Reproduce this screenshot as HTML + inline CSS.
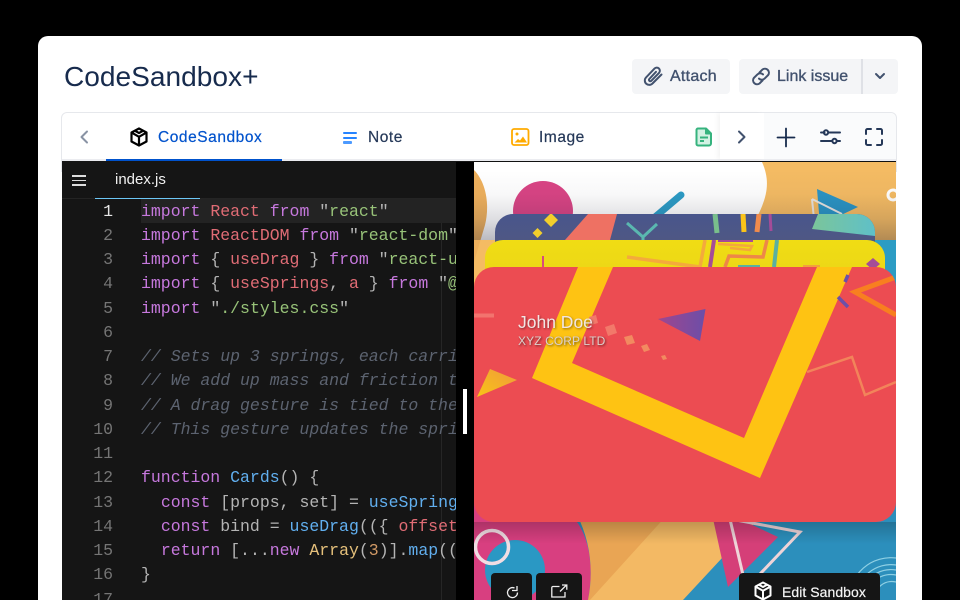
<!DOCTYPE html>
<html><head><meta charset="utf-8"><style>
*{box-sizing:border-box}
html,body{margin:0;padding:0;width:960px;height:600px;overflow:hidden;background:#000;font-family:"Liberation Sans",sans-serif}
#root{position:relative;width:960px;height:600px;overflow:hidden;background:#000}
.a{position:absolute}
#card{left:38px;top:36px;width:884px;height:564px;background:#fff;border-radius:10px 10px 0 0}
.btn{background:#f4f5f7;color:#42526e;font-size:16px}
.lbl{font-weight:400;-webkit-text-stroke:.35px #42526e;line-height:20px;white-space:nowrap}
.tab{font-size:15.5px;color:#253858;top:129px;letter-spacing:.55px;line-height:18px;-webkit-text-stroke:.2px currentColor}
#code{left:141px;top:199.5px;height:400px;font:16.5px/24.27px "Liberation Mono",monospace;color:#b4b4b4;white-space:pre;width:315px;overflow:hidden}
#nums{left:62px;width:51px;top:199.5px;height:400px;overflow:hidden;font:16.5px/24.27px "Liberation Mono",monospace;color:#757575;text-align:right;white-space:pre}
.k{color:#c678dd}.r{color:#e06c75}.s{color:#98c379}.c{color:#5c6370;font-style:italic}.f{color:#61afef}.y{color:#e5c07b}.n{color:#d19a66}
</style></head><body><div id="root">
<div class="a" id="card"></div>
<div class="a" style="left:64px;top:59px;font-size:28.1px;line-height:36px;color:#172b4d;white-space:nowrap">CodeSandbox+</div>

<div class="a btn" style="left:632px;top:59px;width:98px;height:35px;border-radius:4px"></div>
<svg class="a" style="left:642px;top:65px" width="22" height="22" viewBox="0 0 22 22" fill="none" stroke="#42526e" stroke-width="2" stroke-linecap="round"><path d="M19.500 9.500 10.500 18.500a4.400 4.400 0 0 1-6.500-6L12.500 3.600a3.100 3.100 0 0 1 4.500 4.300L9.300 15.800a1.300 1.300 0 0 1-2-1.800L14 6.800"/></svg>
<div class="a btn lbl" style="left:670px;top:67px;background:none;letter-spacing:.25px">Attach</div>
<div class="a btn" style="left:739px;top:59px;width:159px;height:35px;border-radius:4px"></div>
<div class="a" style="left:861px;top:59px;width:2px;height:35px;background:#dfe1e6"></div>
<svg class="a" style="left:750px;top:66px" width="22" height="21" viewBox="0 0 22 21" fill="none" stroke="#42526e" stroke-width="2" stroke-linecap="round"><path d="M9.500 6.500 12.500 3.500a4 4 0 0 1 5.600 5.600l-3.500 3.500a4 4 0 0 1-5.600 0"/><path d="M12.500 14.500 9.500 17.500a4 4 0 0 1-5.600-5.600l3.500-3.500a4 4 0 0 1 5.600 0"/></svg>
<div class="a btn lbl" style="left:777px;top:67px;background:none">Link issue</div>
<svg class="a" style="left:874px;top:71px" width="12" height="10" viewBox="0 0 12 10" fill="none" stroke="#42526e" stroke-width="2" stroke-linecap="round" stroke-linejoin="round"><path d="M2 3l4 4 4-4"/></svg>

<div class="a" style="left:61px;top:112px;width:836px;height:60px;border:1px solid #e6e8ec;border-radius:6px 6px 0 0;background:#fff"></div>
<div class="a" style="left:62px;top:159px;width:834px;height:2px;background:#ebecf0"></div>
<div class="a" style="left:106px;top:159px;width:176px;height:2px;background:#0052cc"></div>
<div class="a" style="left:720px;top:113px;width:44px;height:46px;background:#fff;box-shadow:-3px 0 4px rgba(0,0,0,.04)"></div>
<div class="a" style="left:764px;top:113px;width:132px;height:46px;background:#fafbfc;border-radius:0 6px 0 0"></div>

<svg class="a" style="left:76px;top:129px" width="16" height="16" viewBox="0 0 16 16" fill="none" stroke="#8993a4" stroke-width="2" stroke-linecap="round" stroke-linejoin="round"><path d="M11 2.500 5.500 8l5.500 5.500"/></svg>
<svg class="a" style="left:129px;top:127px" width="20" height="20" viewBox="0 0 20 20" fill="none" stroke="#000" stroke-width="2.200" stroke-linejoin="round"><path d="M10 1.500 17.500 5.500v9L10 18.500 2.500 14.500v-9z"/><path d="M2.800 5.700 10 9.800l7.200-4.100M10 9.800v8.500M6 3.800 10 6l4-2.200"/></svg>
<div class="a tab" style="left:158px;color:#0052cc">CodeSandbox</div>
<div class="a" style="left:343px;top:131.500px;width:14px;height:2.500px;background:#2684ff;border-radius:1px"></div>
<div class="a" style="left:343px;top:136.500px;width:14px;height:2.500px;background:#2684ff;border-radius:1px"></div>
<div class="a" style="left:343px;top:141px;width:9px;height:2.500px;background:#4c9aff;border-radius:1px"></div>
<div class="a tab" style="left:368px">Note</div>
<svg class="a" style="left:511px;top:128px" width="19" height="18" viewBox="0 0 19 18"><rect x="1" y="1" width="16.500" height="16" rx="2" fill="none" stroke="#ffab00" stroke-width="1.800"/><circle cx="6" cy="6" r="1.500" fill="#ffab00"/><path d="M3.500 14.500 7 11l2 1.500 3-4 4 6z" fill="#ffab00"/></svg>
<div class="a tab" style="left:539px">Image</div>
<svg class="a" style="left:695px;top:127px" width="18" height="20" viewBox="0 0 18 20" fill="#d3f1e3" stroke="#36b37e" stroke-width="2" stroke-linejoin="round"><path d="M3 1.500h8l5 5v10a2 2 0 0 1-2 2H3a1.500 1.500 0 0 1-1.500-1.500V3A1.500 1.500 0 0 1 3 1.500z"/><path d="M11 2v4.500h4.500" fill="#36b37e"/><path d="M5 10.500h8M5 14h4" fill="none"/></svg>
<svg class="a" style="left:734px;top:129px" width="16" height="16" viewBox="0 0 16 16" fill="none" stroke="#42526e" stroke-width="2" stroke-linecap="round" stroke-linejoin="round"><path d="M5 2.500 10.500 8 5 13.500"/></svg>
<svg class="a" style="left:775px;top:126px" width="22" height="22" viewBox="0 0 22 22" fill="none" stroke="#172b4d" stroke-width="1.800" stroke-linecap="round"><path d="M11 2.500v18M2.500 11.500h17"/></svg>
<svg class="a" style="left:819px;top:127px" width="22" height="20" viewBox="0 0 22 20" fill="none" stroke="#253858" stroke-width="2" stroke-linecap="round"><path d="M2 5.500h3.500M9.500 5.500H21M2 14h11.500M17.500 14H21"/><circle cx="7" cy="5.500" r="2.200"/><circle cx="15.500" cy="14" r="2.200"/></svg>
<svg class="a" style="left:865px;top:128px" width="18" height="18" viewBox="0 0 18 18" fill="none" stroke="#253858" stroke-width="2" stroke-linecap="round"><path d="M1 6V2.500A1.500 1.500 0 0 1 2.500 1H6M12 1h3.500A1.500 1.500 0 0 1 17 2.500V6M17 12v3.500a1.500 1.500 0 0 1-1.500 1.500H12M6 17H2.500A1.500 1.500 0 0 1 1 15.500V12"/></svg>

<div class="a" style="left:62px;top:161px;width:412px;height:439px;background:#151515"></div>
<div class="a" style="left:456px;top:162px;width:18px;height:438px;background:#000"></div>
<div class="a" style="left:474px;top:161px;width:422px;height:1px;background:#111"></div>
<div class="a" style="left:72px;top:175px;width:14px;height:1.500px;background:#ddd"></div>
<div class="a" style="left:72px;top:179.500px;width:14px;height:1.500px;background:#ddd"></div>
<div class="a" style="left:72px;top:184px;width:14px;height:1.500px;background:#ddd"></div>
<div class="a" style="left:115px;top:171px;font-size:15px;line-height:18px;color:#f0f0f0">index.js</div>
<div class="a" style="left:62px;top:198px;width:394px;height:1px;background:#242424"></div>
<div class="a" style="left:95px;top:198px;width:105px;height:1px;background:#6cc7f6"></div>
<div class="a" style="left:141px;top:199px;width:315px;height:24px;background:#232323"></div>
<div class="a" style="left:441px;top:223px;width:1px;height:377px;background:#262626"></div>
<div class="a" id="nums"><span style="color:#e6e6e6">1</span>
2
3
4
5
6
7
8
9
10
11
12
13
14
15
16
17</div>
<div class="a" id="code"><span class="k">import</span> <span class="r">React</span> <span class="k">from</span> "<span class="s">react</span>"
<span class="k">import</span> <span class="r">ReactDOM</span> <span class="k">from</span> "<span class="s">react-dom</span>"
<span class="k">import</span> { <span class="r">useDrag</span> } <span class="k">from</span> "<span class="s">react-use-gesture</span>"
<span class="k">import</span> { <span class="r">useSprings</span>, <span class="r">a</span> } <span class="k">from</span> "<span class="s">@react-spring/web</span>"
<span class="k">import</span> "<span class="s">./styles.css</span>"

<span class="c">// Sets up 3 springs, each carries</span>
<span class="c">// We add up mass and friction to</span>
<span class="c">// A drag gesture is tied to the</span>
<span class="c">// This gesture updates the springs</span>

<span class="k">function</span> <span class="f">Cards</span>() {
  <span class="k">const</span> [props, set] = <span class="f">useSprings</span>
  <span class="k">const</span> bind = <span class="f">useDrag</span>(({ <span class="r">offset</span>
  <span class="k">return</span> [...<span class="k">new</span> <span class="y">Array</span>(<span class="n">3</span>)].<span class="f">map</span>((
}</div>
<div class="a" style="left:463px;top:389px;width:4px;height:45px;background:#fff"></div>

<svg class="a" style="left:474px;top:162px" width="422" height="438" viewBox="474 162 422 438">
<defs>
<linearGradient id="sh" x1="0" y1="0" x2="0" y2="1"><stop offset="0" stop-color="#1a1a30" stop-opacity="0"/><stop offset=".35" stop-color="#1a1a30" stop-opacity=".03"/><stop offset=".7" stop-color="#1a1a30" stop-opacity=".14"/><stop offset="1" stop-color="#1a1a30" stop-opacity=".3"/></linearGradient>
<linearGradient id="bk" x1="0" y1="0" x2="0" y2="1"><stop offset="0" stop-color="#49568c"/><stop offset="1" stop-color="#55597a"/></linearGradient>
<linearGradient id="yl" x1="0" y1="0" x2="0" y2="1"><stop offset="0" stop-color="#f0dd14"/><stop offset=".45" stop-color="#edd816"/><stop offset="1" stop-color="#b9a01c"/></linearGradient>
<linearGradient id="tl" x1="0" y1="0" x2="1" y2="0"><stop offset="0" stop-color="#7bc59a"/><stop offset="1" stop-color="#5fc0c8"/></linearGradient>
<linearGradient id="pu" x1="0" y1="0" x2="1" y2="0"><stop offset="0" stop-color="#a0468e"/><stop offset="1" stop-color="#6c4ea8"/></linearGradient>
<linearGradient id="og" x1="0" y1="1" x2="1" y2="0"><stop offset="0" stop-color="#f8c416"/><stop offset="1" stop-color="#f09a3c"/></linearGradient>
<linearGradient id="lo" x1="0" y1="0" x2="0" y2="1"><stop offset="0" stop-color="#000" stop-opacity=".2"/><stop offset="1" stop-color="#000" stop-opacity="0"/></linearGradient>
<clipPath id="cb"><rect x="495" y="214" width="380" height="60" rx="18"/></clipPath>
<clipPath id="cy"><rect x="485" y="240" width="400" height="60" rx="18"/></clipPath>
<clipPath id="cr"><rect x="474" y="267" width="422" height="255" rx="20"/></clipPath>
</defs>
<rect x="474" y="162" width="422" height="438" fill="#f4bb63"/>
<rect x="860" y="240" width="36" height="90" fill="#2c9cc4"/>
<path d="M474 162H762C770 180 768 195 758 215L740 240H474z" fill="#fff"/>
<path d="M474 170C486 182 490 205 485 225L474 262z" fill="#eeb05c"/>
<circle cx="543" cy="211" r="30" fill="#d94484"/>
<path d="M655 217 681 195" stroke="#2c9cc6" stroke-width="7" stroke-linecap="round"/>
<path d="M817 189 858 207 820 225z" fill="#2a94c4"/>
<path d="M812 199 842 214M812 199l2 20" fill="none" stroke="#e8e4e0" stroke-width="2"/>
<circle cx="893" cy="195" r="5" fill="none" stroke="#fff" stroke-width="3" stroke-dasharray="20 0"/>
<rect x="474" y="170" width="422" height="70" fill="url(#sh)"/>

<rect x="474" y="500" width="422" height="100" fill="#2c8fbc"/>
<path d="M474 500H577V522C590 540 594 570 588 600H474z" fill="#d83f80"/>
<path d="M577 515H740L720 545 640 600H588C594 570 590 540 577 515z" fill="#e9a554"/>
<path d="M667 515H762L683 600H590z" fill="#f3b964"/>
<path d="M710 505 778 537 728 587z" fill="#d53f78"/>
<path d="M485 570A30 30 0 0 1 545 570 30 30 0 0 1 485 570z" fill="#2a98c4"/>
<circle cx="492" cy="547" r="16.500" fill="none" stroke="#f1dde3" stroke-width="3.500"/>
<path d="M729 515 743 575M736 520 800 532 760 574" fill="none" stroke="#efd4d8" stroke-width="3"/>
<g fill="none" stroke="#8fd0e4" stroke-width="1.200"><path d="M874 600A18 18 0 0 1 896 582"/><path d="M866 599A25 25 0 0 1 896 575"/><path d="M861 599A30 30 0 0 1 896 570"/><path d="M856 599A35 35 0 0 1 896 565"/><path d="M849 599A42 42 0 0 1 896 558"/></g>
<rect x="474" y="522" width="422" height="22" fill="url(#lo)"/>

<rect x="495" y="214" width="380" height="60" rx="18" fill="url(#bk)"/>
<g clip-path="url(#cb)">
<path d="M588 214H617L610 240H565z" fill="#ee7163"/>
<path d="M627 223 643 237 657 224M643 237v6" fill="none" stroke="#5ab8b0" stroke-width="3"/>
<path d="M551 213l7 7-7 7-7-7zM537.500 228l5 5-5 5-5-5z" fill="#f2cf2c"/>
<path d="M715 214 717 233" stroke="#79bf8c" stroke-width="5"/>
<path d="M743 214 744 232" stroke="#fcc419" stroke-width="5"/>
<path d="M759 214 757 232" stroke="#f18b4c" stroke-width="5"/>
<path d="M770 214 771 231" stroke="#a44c98" stroke-width="3"/>
<path d="M818 214H875V236L812 229z" fill="url(#tl)"/>
</g>
<rect x="485" y="240" width="400" height="60" rx="18" fill="url(#yl)"/>
<g clip-path="url(#cy)">
<rect x="542" y="256" width="2" height="11" fill="#d84a80"/>
<path d="M627 257 700 267M705 240 700 267" fill="none" stroke="#f4aa3c" stroke-width="3.500"/>
<path d="M714 240 710 267" stroke="#a44c98" stroke-width="4"/>
<path d="M718 241H753" stroke="#a44c98" stroke-width="2"/>
<path d="M725 267 729 256 763 257 767 240" fill="none" stroke="#ee8748" stroke-width="3.500"/>
<path d="M718 244 752 246 750 250 730 248" fill="none" stroke="#f4a83c" stroke-width="2.500"/>
<path d="M777 240 774 267" stroke="#5ab0a0" stroke-width="4"/>
<path d="M738 266H760" stroke="#5ab0a0" stroke-width="2"/>
<path d="M803 266H820" stroke="#f2a13c" stroke-width="2"/>
<path d="M873 258 880 264 873 270 866 264z" fill="#a44c98"/>
</g>
<rect x="474" y="267" width="422" height="255" rx="20" fill="#ec4c52"/>
<g clip-path="url(#cr)">
<path d="M578 267H613L572 363 744 438 817 267H852L760 478 532 378z" fill="#fec313"/>
<path d="M474 313.500h20v4h-20z" fill="#f2746e"/>
<path d="M658 319 705.500 309 700 341z" fill="url(#pu)"/>
<path d="M589 317l7-2 2 8-7 2zM605 327l9-3 3 9-9 3z" fill="#f2796a"/>
<path d="M624 337l8-2 3 8-8 2zM641 346l6-2 3 6-6 2zM661 356l4-1 2 4-4 1z" fill="#f28a60"/>
<path d="M490 369 517 380 477 397z" fill="url(#og)"/>
<path d="M896 277 855 292 896 315" fill="none" stroke="#f87f20" stroke-width="5"/>
<path d="M848 275 845 282M838 297 848 307" fill="none" stroke="#6c50a8" stroke-width="3.500"/>
<path d="M807 372 852 357 865 395 896 382" fill="none" stroke="#f2845a" stroke-width="2.500"/>
</g>
</svg>

<div class="a" style="left:518px;top:312px;font-size:17.500px;line-height:20px;color:#f2e6e4;text-shadow:1px 1px 2px rgba(0,0,0,.45);white-space:nowrap">John Doe</div>
<div class="a" style="left:518px;top:333px;font-size:12px;line-height:16px;color:#ddd0cc;text-shadow:1px 1px 2px rgba(0,0,0,.6);white-space:nowrap;letter-spacing:.1px">XYZ CORP LTD</div>

<div class="a" style="left:491px;top:573px;width:41px;height:27px;background:#151515;border-radius:4px 4px 0 0"></div>
<div class="a" style="left:536px;top:573px;width:46px;height:27px;background:#151515;border-radius:4px 4px 0 0"></div>
<div class="a" style="left:739px;top:573px;width:141px;height:27px;background:#151515;border-radius:4px 4px 0 0"></div>
<svg class="a" style="left:505px;top:585px" width="15" height="15" viewBox="0 0 15 15" fill="none" stroke="#eee" stroke-width="1.300"><path d="M12.500 7.500A5 5 0 1 1 9.500 3"/><path d="M7 5.500h5V1"/></svg>
<svg class="a" style="left:551px;top:584px" width="17" height="14" viewBox="0 0 17 14" fill="none" stroke="#eee" stroke-width="1.300"><path d="M8.500 2.500H2a1.200 1.200 0 0 0-1.200 1.200v9.300H14V8"/><path d="M9 7.500 15.500 1M11 1H15.800V5.800"/></svg>
<svg class="a" style="left:753px;top:581px" width="20" height="19" viewBox="0 0 20 19" fill="none" stroke="#fff" stroke-width="2" stroke-linejoin="round"><path d="M10 1.500 17.500 5.500v9L10 18.500 2.500 14.500v-9z"/><path d="M2.800 5.700 10 9.800l7.200-4.100M10 9.800v8.500M6 3.800 10 6l4-2.200"/></svg>
<div class="a" style="left:782px;top:584px;font-size:14px;line-height:16px;color:#f5f5f5;letter-spacing:.05px;-webkit-text-stroke:.2px #f5f5f5;white-space:nowrap">Edit Sandbox</div>
</div></body></html>
